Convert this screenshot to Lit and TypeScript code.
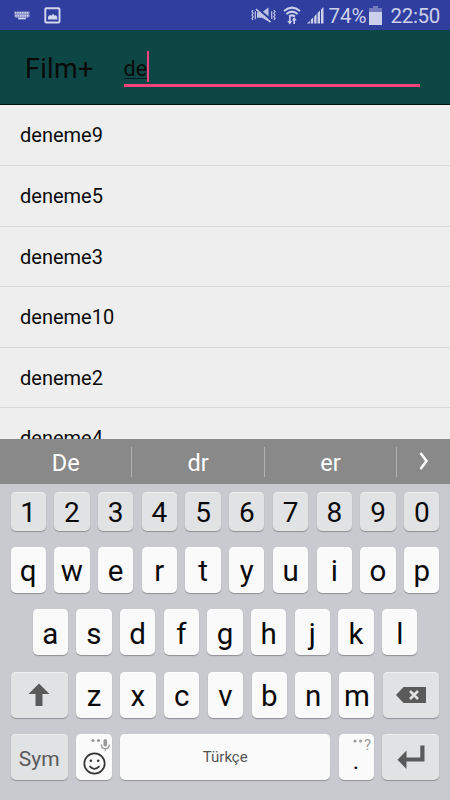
import { LitElement, html, css, svg } from "lit";
import { customElement, property } from "lit/decorators.js";

@customElement("key-cap")
class KeyCap extends LitElement {
  @property() label = "";
  @property({ reflect: true }) kind = "letter";
  static styles = css`
    :host { display: flex; position: relative; box-sizing: border-box; align-items: center; justify-content: center;
      width: 35.3px; flex: none; border-radius: 5px; background: #fafafb; color: #0a0a0a;
      box-shadow: 0 1px 1px #8f9094, inset 0 1px 0 #fff; font-size: 29.5px; }
    :host([kind="digit"]) { background: #e1e2e4; font-size: 28px; box-shadow: 0 1px 1px #8f9094, inset 0 1px 0 #eeeff0; }
    :host([kind="func"]) { background: #e1e2e4; color: #5a5a5b; font-size: 21px; box-shadow: 0 1px 1px #8f9094, inset 0 1px 0 #eeeff0; }
    :host([kind="space"]) { color: #555; font-size: 15px; }
    .label { line-height: 32px; padding-top: 3px; }
    :host([kind="space"]) .label { padding-top: 0; }
    :host([kind="func"]) .label { padding-top: 4px; }
  `;
  render() {
    return this.label ? html`<span class="label">${this.label}</span>` : html`<slot></slot>`;
  }
}

@customElement("app-root")
class AppRoot extends LitElement {
  static styles = css`
    :host { display: flex; flex-direction: column; width: 450px; height: 800px; overflow: hidden;
      font-family: Roboto, "Liberation Sans", sans-serif; background: #eee; color: #0a0a0a; }
    svg { display: block; flex: none; }
    .status { height: 30px; flex: none; background: #303f9f; color: #cdd0ea; display: flex; align-items: center; box-sizing: border-box; padding: 0 10px 0 14px; }
    .picture { margin-left: 14px; }
    .right { margin-left: auto; display: flex; align-items: center; font-size: 20.5px; line-height: 30px; }
    .right span { padding-top: 1px; }
    .wifi { margin-left: 7px; } .signal { margin-left: 6px; }
    .percent { margin-left: 4px; } .battery { margin-left: 3px; } .time { margin-left: 8px; letter-spacing: -.3px; }
    .toolbar { height: 75px; flex: none; box-sizing: border-box; background: #0d4745; border-bottom: 1px solid #001411; display: flex; padding: 22px 30px 0 25px; }
    .title { font-size: 27px; line-height: 34px; width: 98.5px; letter-spacing: .3px; }
    .search { flex: 1; height: 32px; border-bottom: 3px solid #f5427f; display: flex; align-items: flex-start; }
    .typed { font-size: 21.5px; line-height: 24px; margin-top: 5px; border-bottom: 1px solid #031c1b; height: 21px; }
    .caret { width: 2px; height: 31px; background: #f5427f; margin-top: -1px; }
    .list { flex: 1; min-height: 0; overflow: hidden; }
    .row { height: 60.6px; box-sizing: border-box; border-bottom: 1px solid #d8d8d8; padding-left: 20px; font-size: 20px; line-height: 61px; }
    .row:first-child { height: 61px; line-height: 61.5px; }
    .suggest { height: 45px; flex: none; background: #89898a; color: #fff; display: flex; align-items: center; font-size: 23.5px; }
    .word { width: 132.4px; height: 30px; line-height: 32px; box-sizing: border-box; text-align: center; border-right: 1.5px solid #b2b2b3; }
    .more { flex: 1; display: flex; justify-content: center; padding-bottom: 1px; }
    .keyboard { height: 316px; flex: none; box-sizing: border-box; background: #c9cacf; padding: 8px 10.5px 0; display: flex; flex-direction: column; gap: 16.2px; }
    .keys { height: 46.2px; flex: none; display: flex; justify-content: space-between; }
    .digits { height: 38.6px; }
    .middle { padding: 0 22px; }
    .shift { width: 57.5px; } .back { width: 56.5px; } .sym { width: 57.5px; } .enter { width: 57px; }
    .space { width: 210.3px; }
    .stop { position: absolute; left: 14px; top: 19px; font-size: 24px; line-height: 16px; }
    .query { position: absolute; right: 3px; top: 3px; font-size: 15px; line-height: 16px; color: #9a9a9a; }
    .dots { position: absolute; left: 14px; top: 5px; }
  `;

  private items = ["deneme9", "deneme5", "deneme3", "deneme10", "deneme2", "deneme4"];

  private keys(text: string, kind = "letter") {
    return [...text].map((c) => html`<key-cap kind=${kind} .label=${c}></key-cap>`);
  }

  private keyDots() {
    return [0, 1, 2, 3, 4, 5].map((i) => svg`<path d="M${1.5 + i * 2.4} 1v1.6M${2 + i * 2.3} 4v1.6"/>`);
  }

  render() {
    return html`
      <div class="status">
        <svg width="16" height="9" viewBox="0 0 16 9"><path d="M.5 .5h15v5.500l-2 .8h-1.500v1.700h-8V6.800H2.500l-2-.8z" fill="#8a93cc"/><g stroke="#d6d9ef" stroke-width="1.200">${this.keyDots()}<path d="M4.500 7.500h7"/></g></svg>
        <svg class="picture" width="17" height="17" viewBox="0 0 17 17"><rect x="1.300" y="1.300" width="14.200" height="14.200" rx="1" fill="#303f9f" stroke="#d3d6ed" stroke-width="1.900"/><path d="M4 12.500V9.700L6 7.800l1.300 1L9 6.700l1.700 2.100 1-.8 1.500 1.700v2.800z" fill="#d3d6ed"/></svg>
        <div class="right">
          <svg width="25" height="18" viewBox="0 0 25 18" fill="none" stroke="#bfc5e5"><path d="M2 4l-1 1.600L2.200 7.300 1 9l1.200 1.700L1 12.400 2 14M4.300 5.200v8M23 4l1 1.600-1.200 1.700L24 9l-1.200 1.700 1.200 1.700-1 1.600M20.700 5.200v8" stroke-width="1.200"/><path d="M6 6.200h5L17.500 1.500v14L11 11.800H6z" fill="#bfc5e5" stroke="none"/><path d="M6 1.800L21 14.800" stroke="#303f9f" stroke-width="2.200"/><path d="M5 3.200L19.500 16.200" stroke-width="1.700"/></svg>
          <svg class="wifi" width="18" height="19" viewBox="0 0 18 19" fill="none" stroke="#cdd0ea" stroke-width="2"><path d="M1 5Q9-1.800 17 5M3.400 8Q9 3.300 14.600 8M6 10.500Q9 8.200 12 10.500"/><path d="M6.800 11v6M11.200 18v-6" stroke-width="1.600"/><path d="M4.300 15l2.500 3.500L9.200 15zM8.800 14.500l2.400-3.500 2.500 3.500z" fill="#cdd0ea" stroke="none"/></svg>
          <svg class="signal" width="17" height="17" viewBox="0 0 17 17" fill="#cdd0ea"><path d="M0 16.500l2.800-2.800v2.800zM3.800 12.800l2.400-2.400v6.100H3.800zM7.200 9.400L9.600 7v9.500H7.200zM10.600 6L13 3.600v12.900h-2.400zM14 2.600L16.500 0v16.500H14z"/></svg>
          <span class="percent">74%</span>
          <svg class="battery" width="13" height="19" viewBox="0 0 13 19"><path d="M4 0h5v2h4v5H0V2h4z" fill="#717bbd"/><path d="M0 6h13v13H0z" fill="#cdd0ea"/></svg>
          <span class="time">22:50</span>
        </div>
      </div>
      <div class="toolbar"><div class="title">Film+</div><div class="search"><span class="typed">de</span><span class="caret"></span></div></div>
      <div class="list">${this.items.map((t) => html`<div class="row">${t}</div>`)}</div>
      <div class="suggest">
        <div class="word">De</div><div class="word">dr</div><div class="word">er</div>
        <div class="more"><svg width="10" height="18" viewBox="0 0 10 18" fill="none" stroke="#fff" stroke-width="2.500"><path d="M1.500 1l6 8-6 8"/></svg></div>
      </div>
      <div class="keyboard">
        <div class="keys digits">${this.keys("1234567890", "digit")}</div>
        <div class="keys">${this.keys("qwertyuiop")}</div>
        <div class="keys middle">${this.keys("asdfghjkl")}</div>
        <div class="keys">
          <key-cap class="shift" kind="func"><svg width="22" height="24" viewBox="0 0 22 24" fill="#5a5a5b"><path d="M11 0.500L21.500 11H14.500v12H7.500V11H.5z"/></svg></key-cap>
          ${this.keys("zxcvbnm")}
          <key-cap class="back" kind="func"><svg width="30" height="16" viewBox="0 0 30 16"><path d="M7.500 0H30v16H7.500L0 8z" fill="#5a5a5b"/><path d="M14 4l8 8M22 4l-8 8" stroke="#e1e2e4" stroke-width="2.600"/></svg></key-cap>
        </div>
        <div class="keys">
          <key-cap class="sym" kind="func" label="Sym"></key-cap>
          <key-cap>
            <svg width="35" height="46" viewBox="0 0 35 46"><g fill="#999"><circle cx="16" cy="6.500" r="1.600"/><circle cx="21.500" cy="6.500" r="1.600"/><rect x="26.500" y="5" width="3.600" height="7.500" rx="1.800"/></g><path d="M24.300 10.500q0 4.200 4 4.200t4-4.200M28.300 14.500v2.500" fill="none" stroke="#999" stroke-width="1.300"/><g fill="none" stroke="#353535" stroke-width="1.700"><circle cx="17.500" cy="29.500" r="10.200"/><path d="M12.500 32.200q5 5.300 10 0"/></g><circle cx="13.800" cy="26.700" r="1.300" fill="#353535"/><circle cx="21.200" cy="26.700" r="1.300" fill="#353535"/></svg>
          </key-cap>
          <key-cap class="space" kind="space" label="Türkçe"></key-cap>
          <key-cap><svg class="dots" width="10" height="4" viewBox="0 0 10 4" fill="#999"><circle cx="2" cy="2" r="1.500"/><circle cx="7.500" cy="2" r="1.500"/></svg><span class="query">?</span><span class="stop">.</span></key-cap>
          <key-cap class="enter" kind="func"><svg width="28" height="25" viewBox="0 0 28 25" fill="#5a5a5b"><path d="M23.300 0.500h4.200v16H9.500v7.500L.5 14.700l9-9.200v7h13.800z"/></svg></key-cap>
        </div>
      </div>`;
  }
}
